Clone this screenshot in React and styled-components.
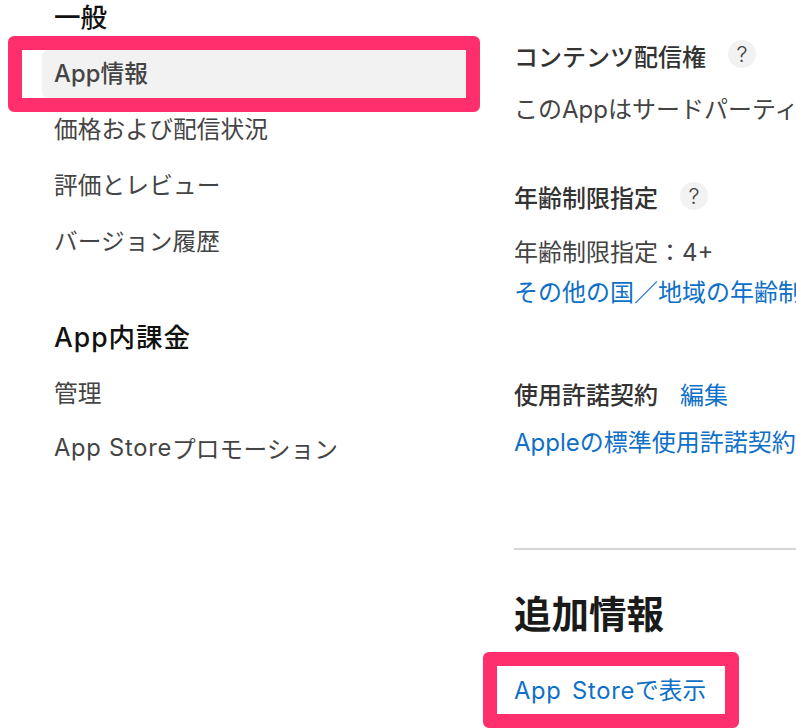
import React from 'react';
import styled, { createGlobalStyle } from 'styled-components';

const GlobalStyle = createGlobalStyle`
  html, body {
    margin: 0;
    padding: 0;
    background: #fff;
    overflow: hidden;
  }
  body {
    font-family: Inter, "Noto Sans CJK JP", "Noto Sans", sans-serif;
    color: #333;
  }
`;

const Page = styled.div`
  width: 796px;
  height: 728px;
  overflow: hidden;
  position: relative;
  display: grid;
  grid-template-columns: 424px 1fr;
  column-gap: 48px;
  padding-left: 42px;
  box-sizing: border-box;
`;

const Sidebar = styled.nav`
  display: flex;
  flex-direction: column;
`;

const NavHeading = styled.h2`
  margin: ${(p) => (p.$later ? '46px' : '0')} 0 16px 12px;
  height: 34px;
  font-size: 26.5px;
  line-height: 34px;
  font-weight: 500;
  letter-spacing: ${(p) => (p.$later ? '1px' : '0')};
  color: #111;
`;

const NavItem = styled.a`
  position: relative;
  display: flex;
  align-items: center;
  box-sizing: border-box;
  height: 48px;
  margin-bottom: 8px;
  padding: 0 0 5px 12px;
  font-size: 23.7px;
  letter-spacing: 0.1px;
  color: #444;
  font-weight: ${(p) => (p.$active ? 500 : 400)};
  background: ${(p) => (p.$active ? '#f2f2f2' : 'transparent')};
  border-radius: 6px 0 0 6px;
  white-space: pre;

  ${(p) =>
    p.$active &&
    `&::after {
      content: '';
      position: absolute;
      inset: -14px -14px -14px -34px;
      border: 14px solid #ff2f6d;
      border-radius: 6px;
    }`}
`;

const Latin = styled.span`
  letter-spacing: 0.75px;
`;

const Content = styled.main`
  padding-top: 35px;
  min-width: 0;
  white-space: nowrap;
`;

const Title = styled.h3`
  display: flex;
  align-items: center;
  gap: 22px;
  height: 40px;
  margin: ${(p) => p.$top || 0}px 0 0;
  font-size: 24px;
  font-weight: 500;
  color: #333;
`;

const Help = styled.span`
  display: flex;
  align-items: center;
  justify-content: center;
  width: 28px;
  height: 28px;
  margin-top: ${(p) => p.$lift || 0}px;
  border-radius: 50%;
  background: #f2f2f2;
  font-size: 22px;
  font-weight: 300;
  color: #444;
`;

const Body = styled.p`
  height: 40px;
  margin: ${(p) => p.$top || 0}px 0 0;
  font-size: 24px;
  line-height: 40px;
  color: #444;
`;

const Link = styled.a`
  color: #0f70c7;
  font-weight: 400;
`;

const LinkRow = styled.p`
  height: 40px;
  margin: ${(p) => p.$top || 0}px 0 0;
  font-size: 24px;
  line-height: 40px;
`;

const Divider = styled.hr`
  height: 2px;
  margin: 85px 0 0;
  border: 0;
  background: #d6d6d6;
`;

const SectionHeading = styled.h2`
  margin: 40px 0 0;
  font-size: 37.5px;
  line-height: 50px;
  font-weight: 700;
  color: #1a1a1a;
`;

const StoreLink = styled(Link)`
  position: relative;
  display: inline-block;
  margin-top: 26px;
  padding-top: 2px;
  font-size: 23.7px;
  line-height: 46px;
  word-spacing: 3px;

  &::after {
    content: '';
    position: absolute;
    inset: -14px -33px -14px -31px;
    border: 14px solid #ff2f6d;
    border-radius: 6px;
  }
`;

const App = () => {
  return (
    <>
      <GlobalStyle />
      <Page>
        <Sidebar>
          <NavHeading>一般</NavHeading>
          <NavItem $active>App情報</NavItem>
          <NavItem>価格および配信状況</NavItem>
          <NavItem>評価とレビュー</NavItem>
          <NavItem>バージョン履歴</NavItem>
          <NavHeading $later>App内課金</NavHeading>
          <NavItem>管理</NavItem>
          <NavItem>
            <Latin>App Store</Latin>プロモーション
          </NavItem>
        </Sidebar>
        <Content>
          <Title>
            コンテンツ配信権 <Help $lift={-2}>?</Help>
          </Title>
          <Body $top={15}>このAppはサードパーティのコンテンツを含みます</Body>
          <Title $top={46}>
            年齢制限指定 <Help>?</Help>
          </Title>
          <Body $top={17}>年齢制限指定：4+</Body>
          <LinkRow>
            <Link>その他の国／地域の年齢制限指定</Link>
          </LinkRow>
          <Title $top={60}>
            使用許諾契約 <Link>編集</Link>
          </Title>
          <LinkRow $top={10}>
            <Link>Appleの標準使用許諾契約</Link>
          </LinkRow>
          <Divider />
          <SectionHeading>追加情報</SectionHeading>
          <StoreLink>
            <Latin>App Store</Latin>で表示
          </StoreLink>
        </Content>
      </Page>
    </>
  );
};

export default App;
